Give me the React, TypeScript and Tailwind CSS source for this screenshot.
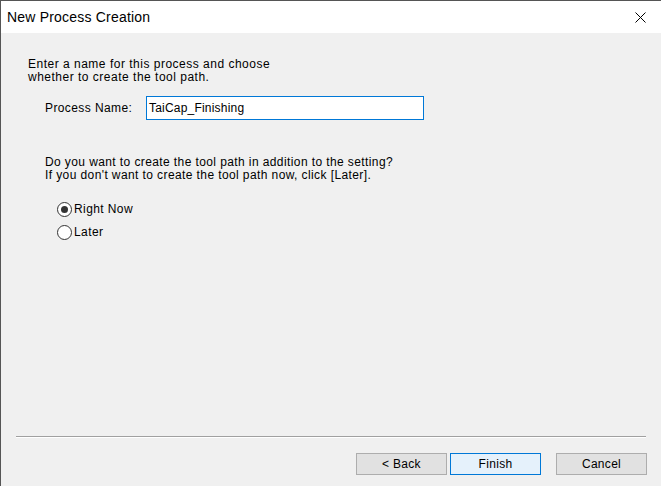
import React from "react";

const body = { fontFamily: '"Liberation Sans", Arial, sans-serif' };

function Radio({ label, checked }: { label: string; checked?: boolean }) {
  return (
    <label className="flex h-4 items-center">
      <span className="flex h-[15px] w-[15px] items-center justify-center rounded-full border border-[#333] bg-white">
        {checked && <span className="h-[7px] w-[7px] rounded-full bg-[#333]" />}
      </span>
      <span className="ml-[2px] text-[12px] leading-[13px] tracking-[0.4px] text-black">
        {label}
      </span>
    </label>
  );
}

function Button({ children, primary }: { children: React.ReactNode; primary?: boolean }) {
  return (
    <button
      className={
        primary
          ? "block h-[22px] w-[91px] border border-[#0078d7] bg-[#e5f1fb] text-[12px] tracking-[0.3px] text-black"
          : "block h-[22px] w-[91px] border border-[#adadad] bg-[#e1e1e1] text-[12px] tracking-[0.3px] text-black"
      }
    >
      {children}
    </button>
  );
}

export default function App() {
  return (
    <div
      className="flex h-[486px] w-[661px] flex-col overflow-hidden border-t border-l border-[#555] bg-[#f0f0f0]"
      style={body}
    >
      <div className="flex h-[32px] shrink-0 items-center justify-between bg-white pl-[6px] pr-[15px]">
        <span className="text-[14px] tracking-[0.2px] text-black">New Process Creation</span>
        <svg width="11" height="11" viewBox="0 0 11 11">
          <path d="M0.5 0.5 L10.5 10.5 M10.5 0.5 L0.5 10.5" stroke="#000" strokeWidth="1" />
        </svg>
      </div>

      <div className="flex flex-1 flex-col">
        <div className="mt-[25px] pl-[27px] text-[12px] leading-[13px] tracking-[0.5px] text-black">
          <p>Enter a name for this process and choose</p>
          <p>whether to create the tool path.</p>
        </div>

        <div className="mt-[12px] flex items-center pl-[44px]">
          <span className="w-[101px] text-[12px] tracking-[0.4px] text-black">Process Name:</span>
          <div className="flex h-[24px] w-[278px] items-center border border-[#0078d7] bg-white pl-[2px] text-[12px] tracking-[0.2px] text-black">
            TaiCap_Finishing
          </div>
        </div>

        <div className="mt-[36px] pl-[44px] text-[12px] leading-[13px] tracking-[0.4px] text-black">
          <p>Do you want to create the tool path in addition to the setting?</p>
          <p>If you don't want to create the tool path now, click [Later].</p>
        </div>

        <div className="mt-[19px] flex flex-col gap-[7px] pl-[56px]">
          <Radio label="Right Now" checked />
          <Radio label="Later" />
        </div>

        <div className="mt-auto">
          <div className="mx-[15px] border-t border-b border-t-[#a0a0a0] border-b-white" />
          <div className="mt-[15px] mb-[11px] flex items-start justify-end pr-[14px]">
            <div className="flex gap-[3px]">
              <Button>&lt; Back</Button>
              <Button primary>Finish</Button>
            </div>
            <div className="ml-[15px]">
              <Button>Cancel</Button>
            </div>
          </div>
        </div>
      </div>
    </div>
  );
}
